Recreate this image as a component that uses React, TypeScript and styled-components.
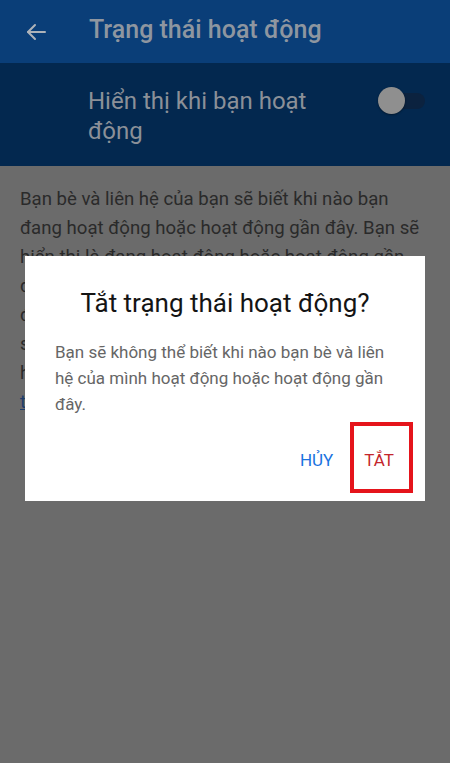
import React from 'react';
import styled, { createGlobalStyle } from 'styled-components';

const GlobalStyle = createGlobalStyle`
  html, body {
    margin: 0;
    padding: 0;
    background: #6b6b6b;
  }
  body {
    font-family: Roboto, "Noto Sans", "Liberation Sans", sans-serif;
  }
`;

const Screen = styled.div`
  background: #6b6b6b;
  display: flex;
  flex-direction: column;
  height: 763px;
  overflow: hidden;
  position: relative;
  width: 450px;
`;

const Header = styled.header`
  align-items: center;
  background: #0a3e78;
  box-sizing: border-box;
  display: flex;
  flex-shrink: 0;
  gap: 41px;
  height: 63px;
  padding-left: 24px;
`;

const BackButton = styled.div`
  display: flex;
  height: 24px;
  width: 24px;
`;

const Title = styled.h1`
  color: #8e96a0;
  font-size: 25px;
  font-weight: 500;
  margin: 0 0 4px 0;
`;

const SettingRow = styled.div`
  align-items: flex-start;
  background: #03284f;
  box-sizing: border-box;
  display: flex;
  flex-shrink: 0;
  height: 103px;
  padding: 23px 25px 0 88px;
`;

const SettingLabel = styled.div`
  color: #8b9098;
  flex: 1;
  font-size: 24px;
  line-height: 30px;
  max-width: 250px;
`;

const Toggle = styled.div`
  height: 27px;
  margin-left: auto;
  margin-top: 1px;
  position: relative;
  width: 47px;

  &::before {
    background: #0b223f;
    border-radius: 8px;
    content: '';
    height: 16px;
    left: 6px;
    position: absolute;
    right: 0;
    top: 6px;
  }
`;

const Thumb = styled.span`
  background: #8f8f8f;
  border-radius: 50%;
  box-shadow: 0 1px 2px rgba(0, 0, 0, 0.4);
  height: 27px;
  left: 0;
  position: absolute;
  top: 0;
  width: 27px;
`;

const Body = styled.div`
  color: #2a2a2a;
  font-size: 18.6px;
  line-height: 29px;
  padding: 19px 20px;
  white-space: nowrap;
`;

const Link = styled.span`
  color: #1d3d6b;
  text-decoration: underline;
`;

const Scrim = styled.div`
  inset: 0;
  position: absolute;
`;

const Dialog = styled.div`
  background: #ffffff;
  box-sizing: border-box;
  display: flex;
  flex-direction: column;
  height: 245px;
  left: 25px;
  padding: 31px 12px 8px 30px;
  position: absolute;
  top: 256px;
  width: 400px;
`;

const DialogTitle = styled.h2`
  color: #141414;
  font-size: 26px;
  font-weight: 400;
  line-height: 32px;
  margin: 0 18px 0 0;
  text-align: center;
`;

const DialogMessage = styled.p`
  color: #666666;
  font-size: 17px;
  line-height: 26px;
  margin: 20px 18px 0 0;
`;

const Actions = styled.div`
  align-items: center;
  display: flex;
  justify-content: flex-end;
  margin-top: auto;
`;

const ActionButton = styled.button<{ $tone: 'primary' | 'danger'; $marked?: boolean }>`
  background: none;
  border: ${(props) => (props.$marked ? '4px solid #e5141b' : 'none')};
  color: ${(props) => (props.$tone === 'danger' ? '#c4262c' : '#1a73e0')};
  font-family: inherit;
  font-size: 17px;
  height: 71px;
  margin-right: ${(props) => (props.$marked ? '0' : '17px')};
  padding: ${(props) => (props.$marked ? '5px 15px 0 10px' : '5px 0 0 0')};
  text-transform: uppercase;
`;

export default function App() {
  return (
    <Screen>
      <GlobalStyle />
      <Header>
        <BackButton>
          <svg width="24" height="24" viewBox="0 0 24 24" fill="none" stroke="#aeb3b9" strokeWidth="2" strokeLinecap="round" strokeLinejoin="round">
            <path d="M21 12H4" />
            <path d="M11 5l-7 7 7 7" />
          </svg>
        </BackButton>
        <Title>Trạng thái hoạt động</Title>
      </Header>
      <SettingRow>
        <SettingLabel>Hiển thị khi bạn hoạt động</SettingLabel>
        <Toggle>
          <Thumb />
        </Toggle>
      </SettingRow>
      <Body>
        Bạn bè và liên hệ của bạn sẽ biết khi nào bạn
        <br />
        đang hoạt động hoặc hoạt động gần đây. Bạn sẽ
        <br />
        hiển thị là đang hoạt động hoặc hoạt động gần
        <br />
        đây trên mọi thiết bị bạn đang sử dụng, trừ khi
        <br />
        đã tắt cài đặt này. Bạn cũng sẽ thấy khi nào
        <br />
        sẽ có bạn bè và liên hệ đang hoạt động hoặc
        <br />
        hoạt động gần đây.
        <br />
        <Link>tìm hiểu thêm</Link>
      </Body>
      <Scrim>
        <Dialog>
          <DialogTitle>Tắt trạng thái hoạt động?</DialogTitle>
          <DialogMessage>
            Bạn sẽ không thể biết khi nào bạn bè và liên hệ của mình hoạt động hoặc hoạt động gần
            đây.
          </DialogMessage>
          <Actions>
            <ActionButton $tone="primary">Hủy</ActionButton>
            <ActionButton $tone="danger" $marked>
              Tắt
            </ActionButton>
          </Actions>
        </Dialog>
      </Scrim>
    </Screen>
  );
}
